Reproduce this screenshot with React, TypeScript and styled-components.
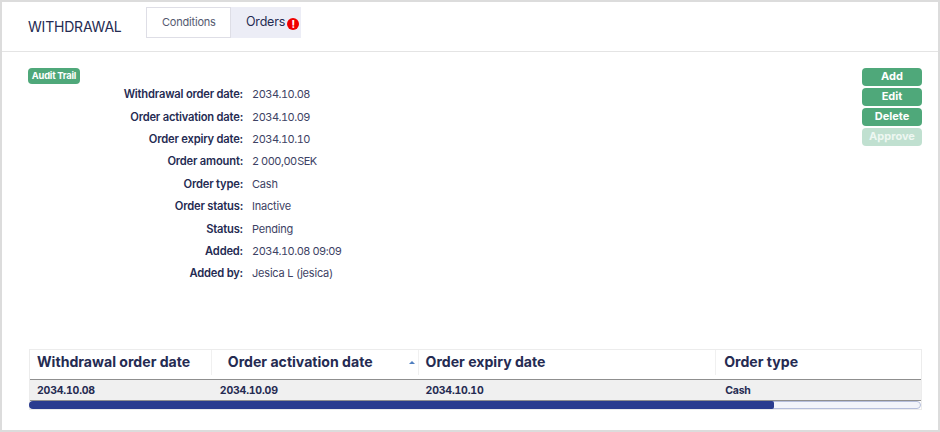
import styled, { createGlobalStyle } from "styled-components";

const GlobalStyle = createGlobalStyle`
  html, body {
    margin: 0;
    padding: 0;
    background: #ffffff;
  }
  * {
    box-sizing: border-box;
  }
`;

const details = [
  ["Withdrawal order date:", "2034.10.08"],
  ["Order activation date:", "2034.10.09"],
  ["Order expiry date:", "2034.10.10"],
  ["Order amount:", "2 000,00\u200aSEK"],
  ["Order type:", "Cash"],
  ["Order status:", "Inactive"],
  ["Status:", "Pending"],
  ["Added:", "2034.10.08 09:09"],
  ["Added by:", "Jesica L (jesica)"],
];

const columns = [
  { label: "Withdrawal order date", value: "2034.10.08", width: 182, labelPad: 8, cellPad: 8 },
  { label: "Order activation date", value: "2034.10.09", width: 207, labelPad: 17, cellPad: 9, sorted: true },
  { label: "Order expiry date", value: "2034.10.10", width: 298, labelPad: 8, cellPad: 8 },
  { label: "Order type", value: "Cash", width: 205, labelPad: 9, cellPad: 10 },
];

const App = () => {
  return (
    <FrameStyled>
      <GlobalStyle />
      <HeaderStyled>
        <TitleStyled>WITHDRAWAL</TitleStyled>
        <TabsStyled>
          <TabStyled $active>Conditions</TabStyled>
          <TabStyled>
            <OrdersLabelStyled>Orders</OrdersLabelStyled>
            <AlertBadgeStyled>!</AlertBadgeStyled>
          </TabStyled>
        </TabsStyled>
      </HeaderStyled>
      <ContentStyled>
        <TopRowStyled>
          <InfoStyled>
            <AuditBadgeStyled>Audit Trail</AuditBadgeStyled>
            <DetailListStyled>
              {details.map(([label, value]) => (
                <DetailRowStyled key={label}>
                  <DetailLabelStyled>{label}</DetailLabelStyled>
                  <DetailValueStyled $numeric={/^\d/.test(value)}>{value}</DetailValueStyled>
                </DetailRowStyled>
              ))}
            </DetailListStyled>
          </InfoStyled>
          <ActionsStyled>
            <ActionButtonStyled>Add</ActionButtonStyled>
            <ActionButtonStyled>Edit</ActionButtonStyled>
            <ActionButtonStyled>Delete</ActionButtonStyled>
            <ActionButtonStyled $disabled>Approve</ActionButtonStyled>
          </ActionsStyled>
        </TopRowStyled>
        <TableStyled>
          <TableHeadStyled>
            {columns.map((col) => (
              <HeadCellStyled key={col.label} $width={col.width} $pad={col.labelPad}>
                {col.label}
                {col.sorted && <SortArrowStyled />}
              </HeadCellStyled>
            ))}
          </TableHeadStyled>
          <TableRowStyled>
            {columns.map((col) => (
              <BodyCellStyled key={col.label} $width={col.width} $pad={col.cellPad}>
                {col.value}
              </BodyCellStyled>
            ))}
          </TableRowStyled>
          <ScrollTrackStyled>
            <ScrollThumbStyled />
          </ScrollTrackStyled>
        </TableStyled>
      </ContentStyled>
    </FrameStyled>
  );
};

export default App;

const FrameStyled = styled.div`
  width: 940px;
  height: 432px;
  border: 2px solid #dcdcdc;
  background: #ffffff;
  font-family: Inter, "Liberation Sans", sans-serif;
  color: #252b52;
  overflow: hidden;
`;

const HeaderStyled = styled.div`
  height: 50px;
  display: flex;
  align-items: flex-start;
  padding: 5px 0 0 26px;
  border-bottom: 1px solid #e4e4e4;
`;

const TitleStyled = styled.div`
  width: 118px;
  margin-top: 11px;
  font-size: 14px;
  line-height: 17px;
  letter-spacing: -0.2px;
`;

const TabsStyled = styled.div`
  display: flex;
  height: 31px;
`;

const TabStyled = styled.div<{ $active?: boolean }>`
  width: ${({ $active }) => ($active ? "85px" : "70px")};
  display: flex;
  padding: ${({ $active }) => ($active ? "7px 0 0 15px" : "6px 0 0 14px")};
  border: 1px solid ${({ $active }) => ($active ? "#dedee6" : "#ecedf6")};
  background: ${({ $active }) => ($active ? "#ffffff" : "#ecedf6")};
  font-size: ${({ $active }) => ($active ? "11px" : "12.5px")};
  line-height: 15px;
  letter-spacing: -0.2px;
  color: ${({ $active }) => ($active ? "#555a70" : "#252b52")};
`;

const OrdersLabelStyled = styled.span`
  line-height: 16px;
`;

const AlertBadgeStyled = styled.span`
  width: 12px;
  height: 12px;
  margin: 4px 0 0 2px;
  border-radius: 50%;
  background: #f00000;
  color: #ffffff;
  font-size: 10px;
  font-weight: 800;
  line-height: 12px;
  text-align: center;
`;

const ContentStyled = styled.div`
  padding: 16px 16px 0 27px;
`;

const TopRowStyled = styled.div`
  height: 281px;
  display: flex;
  justify-content: space-between;
`;

const InfoStyled = styled.div`
  display: flex;
  flex-direction: column;
`;

const AuditBadgeStyled = styled.div`
  width: 52px;
  height: 16px;
  margin-left: -1px;
  border-radius: 4px;
  background: #4fa87a;
  color: #ffffff;
  font-size: 9.3px;
  font-weight: 700;
  line-height: 16px;
  text-align: center;
  letter-spacing: -0.2px;
`;

const DetailListStyled = styled.div`
  display: flex;
  flex-direction: column;
  gap: 5px;
  margin-top: 1.5px;
`;

const DetailRowStyled = styled.div`
  height: 17.4px;
  display: flex;
  align-items: center;
  gap: 9px;
  font-size: 11px;
  letter-spacing: -0.2px;
`;

const DetailLabelStyled = styled.div`
  width: 214px;
  text-align: right;
  font-size: 11.2px;
  font-weight: 600;
`;

const DetailValueStyled = styled.div<{ $numeric: boolean }>`
  color: #3d4264;
  font-variant-numeric: tabular-nums;
  letter-spacing: ${({ $numeric }) => ($numeric ? "-0.5px" : "-0.2px")};
`;

const ActionsStyled = styled.div`
  display: flex;
  flex-direction: column;
  gap: 2px;
`;

const ActionButtonStyled = styled.div<{ $disabled?: boolean }>`
  width: 60px;
  height: 18px;
  border-radius: 4px;
  background: ${({ $disabled }) => ($disabled ? "#c0e0d0" : "#4fa87a")};
  color: ${({ $disabled }) => ($disabled ? "#eef7f2" : "#ffffff")};
  font-size: 11px;
  font-weight: 700;
  line-height: 17px;
  text-align: center;
`;

const TableStyled = styled.div`
  width: 893px;
  border: 1px solid #ececec;
`;

const TableHeadStyled = styled.div`
  height: 30px;
  display: flex;
  border-bottom: 1px solid #8f8f8f;
  padding-bottom: 4px;
`;

const HeadCellStyled = styled.div<{ $width: number; $pad: number }>`
  position: relative;
  width: ${({ $width }) => $width}px;
  padding-left: ${({ $pad }) => $pad - 1}px;
  border-right: 1px solid #f0f0f0;
  font-size: 14.1px;
  font-weight: 700;
  line-height: 24px;
  color: #252b52;
  &:last-child {
    border-right: none;
  }
`;

const SortArrowStyled = styled.span`
  position: absolute;
  right: 3px;
  top: 11px;
  border-left: 3px solid transparent;
  border-right: 3px solid transparent;
  border-bottom: 3px solid #4f7fc0;
`;

const TableRowStyled = styled.div`
  height: 21px;
  display: flex;
  background: #f0f0f0;
  border-bottom: 1px solid #8f8f8f;
`;

const BodyCellStyled = styled.div<{ $width: number; $pad: number }>`
  width: ${({ $width }) => $width}px;
  padding-top: 1px;
  padding-left: ${({ $pad }) => $pad - 1}px;
  font-size: 10.5px;
  font-weight: 700;
  line-height: 19px;
  letter-spacing: -0.2px;
  color: #252b52;
  font-variant-numeric: tabular-nums;
`;

const ScrollTrackStyled = styled.div`
  height: 8px;
  border: 1px solid #b5bedb;
  border-radius: 4px;
  background: #f2f4fa;
`;

const ScrollThumbStyled = styled.div`
  width: 745px;
  height: 8px;
  margin: -1px 0 0 -2px;
  border-radius: 4px 2px 2px 4px;
  background: #2a3c8f;
`;
